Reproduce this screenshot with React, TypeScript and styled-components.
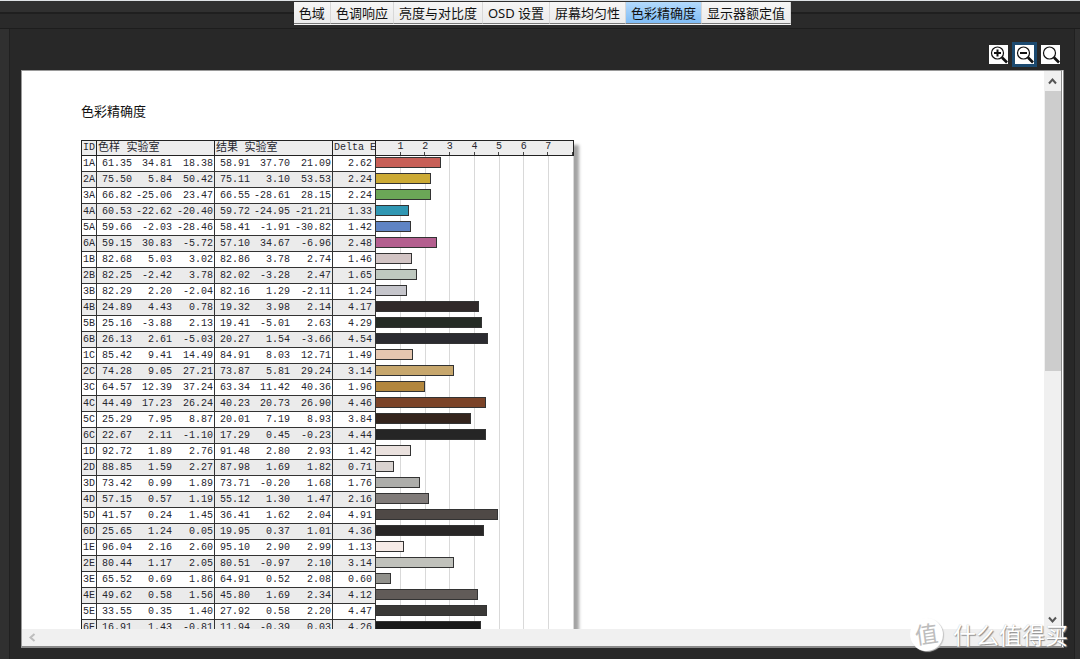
import React, { useState } from 'react';
import styled, { createGlobalStyle, css } from 'styled-components';

const UI_FONT = '"Noto Sans", "Noto Sans CJK SC", sans-serif';
const REPORT_FONT = '"Liberation Mono", "Noto Sans CJK SC", monospace';
const MAX_DELTA = 8;

const GlobalStyle = createGlobalStyle`
  *, *::before, *::after { box-sizing: border-box; }
  body { margin: 0; background: #282828; font-family: ${UI_FONT}; }
  button { font: inherit; margin: 0; padding: 0; border: 0; cursor: pointer; }
`;

const Window = styled.div`
  position: relative;
  display: flex;
  flex-direction: column;
  height: 100vh;
  min-height: 300px;
  overflow: hidden;
  background: #282828;
  border-top: 1px solid #dfe3e6;
`;

const TopBar = styled.header`
  display: flex;
  justify-content: center;
  height: 28px;
  flex: none;
  padding: 1px 0 0 5px;
  border-bottom: 1px solid #1d1d1d;
  background: linear-gradient(#303030 0 11px, #1f1f1f 11px 13px, #2a2a2a 13px);
`;

const TabList = styled.nav`
  display: flex;
  height: 23px;
  border-bottom: 1px solid #f4f4f4;
  background: #f0f0f0;
`;

const Tab = styled.button<{ $active: boolean }>`
  height: 22px;
  padding: 0 5px;
  border-right: 1px solid #d8d8d8;
  border-bottom: 1px solid #777;
  background: linear-gradient(#f6f6f6, #ebebeb);
  color: #111;
  font-size: 13px;
  line-height: 20px;
  white-space: nowrap;
  ${(p) =>
    p.$active &&
    css`
      background: linear-gradient(#b4dafc, #7fbcf5);
    `}
`;

const Body = styled.main`
  display: flex;
  flex: 1;
  min-height: 0;
  border-left: 9px solid #303030;
  border-right: 5px solid #303030;
`;

const Workspace = styled.section`
  display: flex;
  flex-direction: column;
  flex: 1;
  min-width: 0;
  padding: 16px 10px 11px 11px;
  border-left: 1px solid #202020;
  border-right: 1px solid #202020;
`;

const ZoomBar = styled.div`
  display: flex;
  justify-content: flex-end;
  gap: 7px;
  padding: 0 4px 6px 0;
`;

const ZoomButton = styled.button<{ $active: boolean }>`
  display: block;
  width: 19px;
  height: 19px;
  background: #fff;
  outline: ${(p) => (p.$active ? '3px solid #1c4a70' : 'none')};
  svg { display: block; }
`;

const Viewer = styled.div`
  display: flex;
  flex-direction: column;
  flex: 1;
  min-height: 0;
  border: 1px solid #9a9a9a;
  border-right: 3px double #8a8a8a;
  border-bottom: 2px solid #8a8a8a;
  background: #fff;
`;

const ViewerRow = styled.div`
  display: flex;
  flex: 1;
  min-height: 0;
`;

const Sheet = styled.article`
  flex: 1;
  min-width: 0;
  overflow: hidden;
  padding: 30px 0 0 59px;
  background: #fff;
`;

const SheetTitle = styled.h1`
  margin: 0 0 19px;
  font-size: 13px;
  font-weight: 400;
  line-height: 20px;
  color: #111;
`;

const ReportTable = styled.table`
  width: 493px;
  table-layout: fixed;
  border-collapse: separate;
  border-spacing: 0;
  border-left: 1px solid #222;
  border-top: 1px solid #222;
  box-shadow: 5px 5px 3px #a4a4a4;
  background: #fff;
  font-family: ${REPORT_FONT};
  font-size: 10px;
  line-height: 14px;
  color: #26262e;
`;

const Col = styled.col<{ $width: number }>`
  width: ${(p) => p.$width}px;
`;

const HeadCell = styled.th`
  height: 15px;
  padding: 0 0 0 1px;
  border-right: 1px solid #222;
  border-bottom: 1px solid #222;
  background: #ededed;
  font-weight: 400;
  text-align: left;
  white-space: nowrap;
  overflow: hidden;
`;

const AxisCell = styled(HeadCell)`
  padding: 0;
  background:
    repeating-linear-gradient(to right, transparent 0 calc(12.5% - 1px), #444 calc(12.5% - 1px) 12.5%) 0 100% / 100% 3px no-repeat,
    #ededed;
`;

const AxisLabels = styled.div`
  display: flex;
  padding: 0 6.25%;
  line-height: 12px;
  height: 14px;
  span { flex: 1; text-align: center; }
`;

const GroupCell = styled(HeadCell)`
  font-size: 11px;
`;

const Row = styled.tr<{ $shaded: boolean }>`
  --shade: ${(p) => (p.$shaded ? '#ebebeb' : '#fff')};
`;

const Cell = styled.td<{ $last?: boolean; $inset?: number }>`
  height: 16px;
  padding: 0 ${(p) => p.$inset ?? 1}px 0 0;
  border-bottom: 1px solid #333;
  border-right: ${(p) => (p.$last ? '1px solid #333' : '0')};
  background: var(--shade);
  text-align: right;
  white-space: nowrap;
`;

const IdCell = styled(HeadCell)`
  height: 16px;
  border-color: #333;
  background: var(--shade);
`;

const ChartCell = styled.td`
  height: 16px;
  padding: 1px 0 4px;
  background: repeating-linear-gradient(to right, #fff 0 calc(12.5% - 1px), #d9d9d9 calc(12.5% - 1px) 12.5%);
`;

const Bar = styled.div<{ $color: string }>`
  height: 11px;
  border: 1px solid #333;
  border-left: 0;
  background: ${(p) => p.$color};
`;

const VScroll = styled.div`
  display: flex;
  flex-direction: column;
  width: 17px;
  flex: none;
  background: #f0f0f0;
`;

const VTrack = styled.div`
  flex: 1;
  min-height: 0;
`;

const Thumb = styled.div`
  height: 54%;
  margin-left: 1px;
  background: #cdcdcd;
`;

const ScrollButton = styled.button`
  display: grid;
  place-items: center;
  width: 17px;
  height: 20px;
  flex: none;
  background: transparent;
`;

const HScroll = styled.div`
  display: flex;
  align-items: center;
  height: 17px;
  flex: none;
  padding-left: 2px;
  background: #f0f0f0;
`;

const Watermark = styled.div`
  position: absolute;
  right: 12px;
  bottom: 8px;
  display: flex;
  align-items: center;
  gap: 10px;
  color: #fff;
  font-size: 23px;
  line-height: 32px;
  text-shadow: 1px 1px 1px #8c8c8c, 0 0 1px #b4b4b4;
  pointer-events: none;
`;

const Seal = styled.span`
  width: 33px;
  height: 33px;
  border-radius: 50%;
  background: #fff;
  box-shadow: 1px 1px 1px #c4c4c4;
  color: #bdbdbd;
  font-size: 23px;
  line-height: 32px;
  text-align: center;
  text-shadow: none;
  transform: rotate(-8deg);
`;

type Sample = [id: string, sample: string, result: string, delta: string, color: string];

const SAMPLES: Sample[] = [
  ['1A', '61.35 34.81 18.38', '58.91 37.70 21.09', '2.62', '#c75f57'],
  ['2A', '75.50 5.84 50.42', '75.11 3.10 53.53', '2.24', '#ccaa35'],
  ['3A', '66.82 -25.06 23.47', '66.55 -28.61 28.15', '2.24', '#6ba757'],
  ['4A', '60.53 -22.62 -20.40', '59.72 -24.95 -21.21', '1.33', '#3097b3'],
  ['5A', '59.66 -2.03 -28.46', '58.41 -1.91 -30.82', '1.42', '#5f84c4'],
  ['6A', '59.15 30.83 -5.72', '57.10 34.67 -6.96', '2.48', '#b45f8f'],
  ['1B', '82.68 5.03 3.02', '82.86 3.78 2.74', '1.46', '#d2c4c4'],
  ['2B', '82.25 -2.42 3.78', '82.02 -3.28 2.47', '1.65', '#bec8bf'],
  ['3B', '82.29 2.20 -2.04', '82.16 1.29 -2.11', '1.24', '#c5c5cb'],
  ['4B', '24.89 4.43 0.78', '19.32 3.98 2.14', '4.17', '#302929'],
  ['5B', '25.16 -3.88 2.13', '19.41 -5.01 2.63', '4.29', '#252b25'],
  ['6B', '26.13 2.61 -5.03', '20.27 1.54 -3.66', '4.54', '#2b2b30'],
  ['1C', '85.42 9.41 14.49', '84.91 8.03 12.71', '1.49', '#e6c7b0'],
  ['2C', '74.28 9.05 27.21', '73.87 5.81 29.24', '3.14', '#c7a76d'],
  ['3C', '64.57 12.39 37.24', '63.34 11.42 40.36', '1.96', '#b2863d'],
  ['4C', '44.49 17.23 26.24', '40.23 20.73 26.90', '4.46', '#7b4328'],
  ['5C', '25.29 7.95 8.87', '20.01 7.19 8.93', '3.84', '#34241d'],
  ['6C', '22.67 2.11 -1.10', '17.29 0.45 -0.23', '4.44', '#252525'],
  ['1D', '92.72 1.89 2.76', '91.48 2.80 2.93', '1.42', '#eae1de'],
  ['2D', '88.85 1.59 2.27', '87.98 1.69 1.82', '0.71', '#d9d3d0'],
  ['3D', '73.42 0.99 1.89', '73.71 -0.20 1.68', '1.76', '#adadaa'],
  ['4D', '57.15 0.57 1.19', '55.12 1.30 1.47', '2.16', '#807b79'],
  ['5D', '41.57 0.24 1.45', '36.41 1.62 2.04', '4.91', '#4f4946'],
  ['6D', '25.65 1.24 0.05', '19.95 0.37 1.01', '4.36', '#282626'],
  ['1E', '96.04 2.16 2.60', '95.10 2.90 2.99', '1.13', '#f6ebe7'],
  ['2E', '80.44 1.17 2.05', '80.51 -0.97 2.10', '3.14', '#c0c1bb'],
  ['3E', '65.52 0.69 1.86', '64.91 0.52 2.08', '0.60', '#91918c'],
  ['4E', '49.62 0.58 1.56', '45.80 1.69 2.34', '4.12', '#615b58'],
  ['5E', '33.55 0.35 1.40', '27.92 0.58 2.20', '4.47', '#3a3937'],
  ['6E', '16.91 1.43 -0.81', '11.94 -0.39 0.03', '4.26', '#191919'],
];

const TABS = ['色域', '色调响应', '亮度与对比度', 'OSD 设置', '屏幕均匀性', '色彩精确度', '显示器额定值'];
const COLUMNS = [15, 36, 40, 42, 36, 40, 42, 43, 198];
const ZOOMS = [
  { label: '放大', mark: 'M5 8h7M8.5 4.5v7' },
  { label: '缩小', mark: 'M5 8h7' },
  { label: '实际大小', mark: '' },
];

const Lens = ({ mark }: { mark: string }) => (
  <svg width="19" height="19" viewBox="0 0 19 19" fill="none" stroke="#111">
    <circle cx="8.5" cy="8" r="6" strokeWidth="1.2" />
    <path d="M13 12.5l5 5" strokeWidth="2.6" />
    {mark && <path d={mark} strokeWidth="2" />}
  </svg>
);

const Chevron = ({ d, color = '#555' }: { d: string; color?: string }) => (
  <svg width="9" height="9" viewBox="0 0 9 9" fill="none" stroke={color} strokeWidth="2">
    <path d={d} />
  </svg>
);

const LabCells = ({ values }: { values: string }) => (
  <>
    {values.split(' ').map((v, i) => (
      <Cell key={i} $last={i === 2}>{v}</Cell>
    ))}
  </>
);

export default function App() {
  const [tab, setTab] = useState(5);
  const [zoom, setZoom] = useState(1);
  return (
    <Window>
      <GlobalStyle />
      <TopBar>
        <TabList>
          {TABS.map((t, i) => (
            <Tab key={t} $active={i === tab} onClick={() => setTab(i)}>{t}</Tab>
          ))}
        </TabList>
      </TopBar>
      <Body>
        <Workspace>
          <ZoomBar>
            {ZOOMS.map((z, i) => (
              <ZoomButton key={z.label} aria-label={z.label} $active={i === zoom} onClick={() => setZoom(i)}>
                <Lens mark={z.mark} />
              </ZoomButton>
            ))}
          </ZoomBar>
          <Viewer>
            <ViewerRow>
              <Sheet>
                <SheetTitle>色彩精确度</SheetTitle>
                <ReportTable>
                  <colgroup>
                    {COLUMNS.map((w, i) => <Col key={i} $width={w} />)}
                  </colgroup>
                  <thead>
                    <tr>
                      <HeadCell scope="col">ID</HeadCell>
                      <GroupCell scope="colgroup" colSpan={3}>色样 实验室</GroupCell>
                      <GroupCell scope="colgroup" colSpan={3}>结果 实验室</GroupCell>
                      <HeadCell scope="col">Delta E</HeadCell>
                      <AxisCell>
                        <AxisLabels>
                          {Array.from({ length: MAX_DELTA - 1 }, (_, i) => <span key={i}>{i + 1}</span>)}
                        </AxisLabels>
                      </AxisCell>
                    </tr>
                  </thead>
                  <tbody>
                    {SAMPLES.map(([id, sample, result, delta, color], i) => (
                      <Row key={id} $shaded={i % 2 === 1}>
                        <IdCell scope="row">{id}</IdCell>
                        <LabCells values={sample} />
                        <LabCells values={result} />
                        <Cell $last $inset={3}>{delta}</Cell>
                        <ChartCell>
                          <Bar $color={color} style={{ width: `${(Number(delta) / MAX_DELTA) * 100}%` }} />
                        </ChartCell>
                      </Row>
                    ))}
                  </tbody>
                </ReportTable>
              </Sheet>
              <VScroll>
                <ScrollButton aria-label="向上滚动"><Chevron d="M1 6.5l3.5-4 3.5 4" /></ScrollButton>
                <VTrack><Thumb /></VTrack>
                <ScrollButton aria-label="向下滚动"><Chevron d="M1 2.5l3.5 4 3.5-4" /></ScrollButton>
              </VScroll>
            </ViewerRow>
            <HScroll>
              <ScrollButton aria-label="向左滚动"><Chevron d="M6.5 1l-4 3.5 4 3.5" color="#bdbdbd" /></ScrollButton>
            </HScroll>
          </Viewer>
        </Workspace>
      </Body>
      <Watermark>
        <Seal>值</Seal>
        <span>什么值得买</span>
      </Watermark>
    </Window>
  );
}
